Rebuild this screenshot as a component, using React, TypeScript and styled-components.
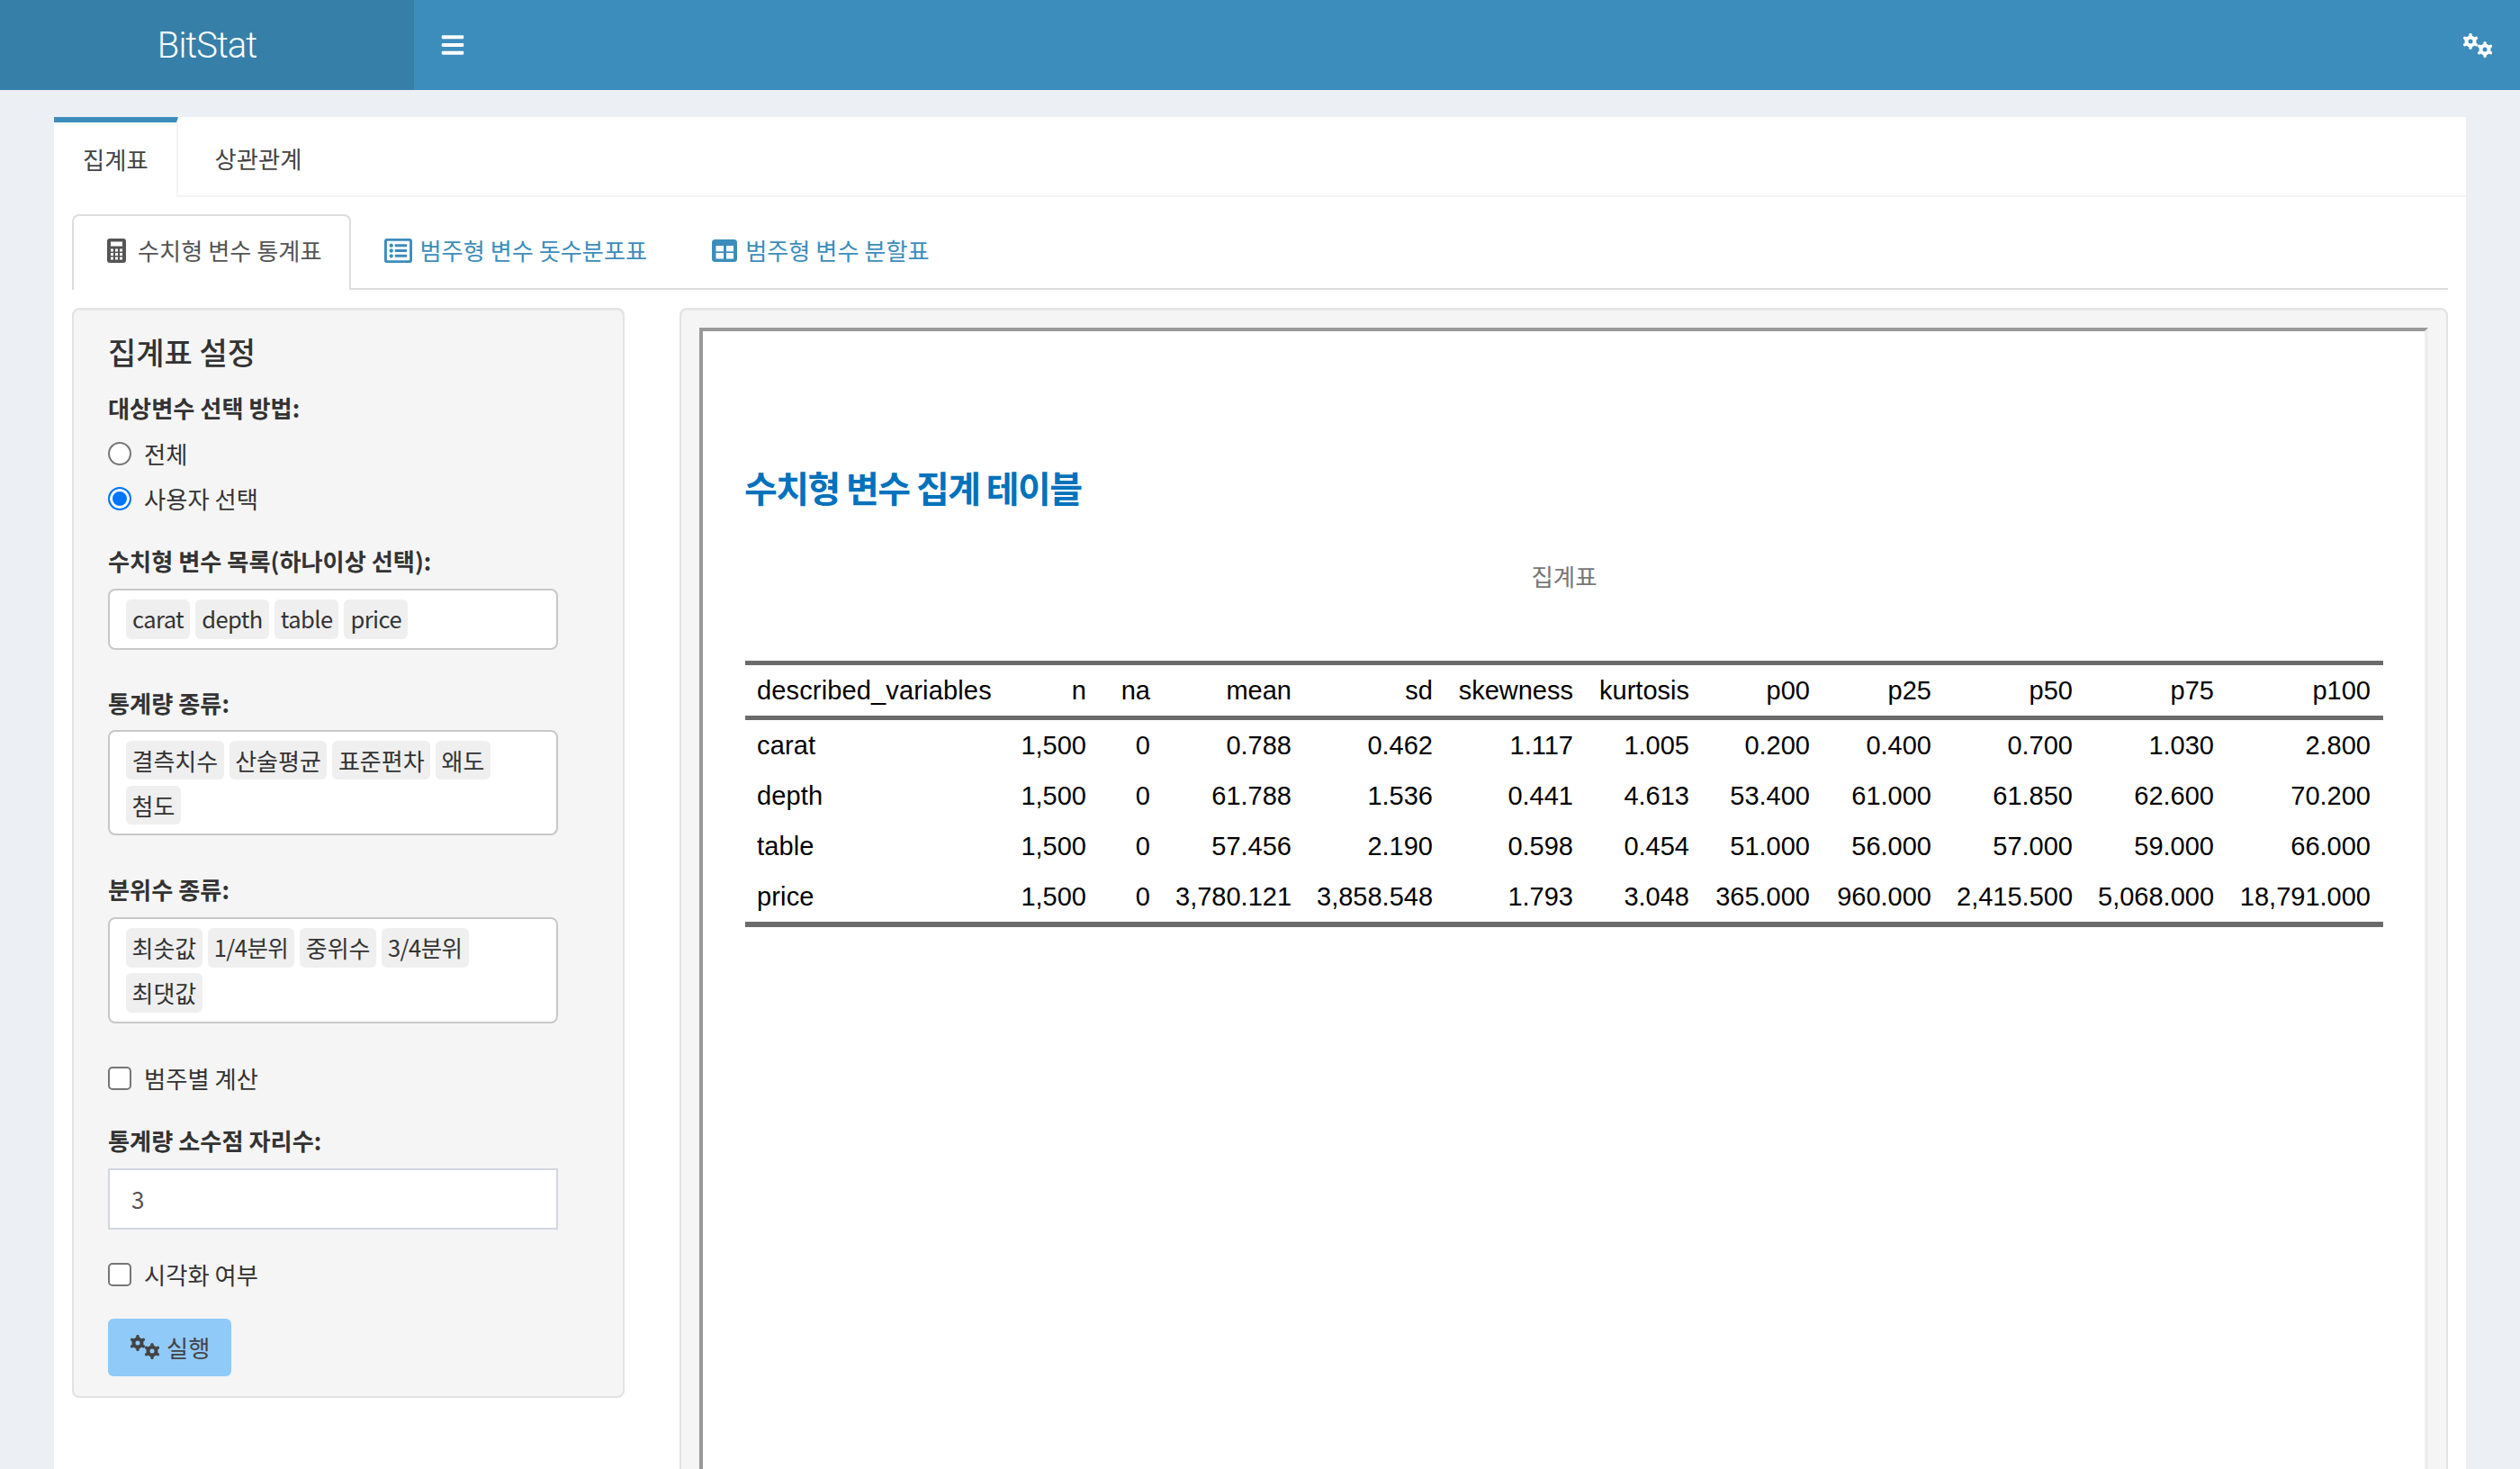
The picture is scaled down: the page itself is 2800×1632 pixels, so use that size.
import styled, { createGlobalStyle } from "styled-components";
import { FaBars, FaRegListAlt } from "react-icons/fa";

const KR = `"Noto Sans CJK KR", "Noto Sans", sans-serif`;

const GlobalStyle = createGlobalStyle`
  html, body {
    margin: 0;
    padding: 0;
    background: #ecf0f5;
  }
  * {
    box-sizing: border-box;
  }
`;

const Page = styled.div`
  height: 100vh;
  overflow: hidden;
  display: flex;
  flex-direction: column;
  font-family: ${KR};
  color: #333;
`;

const Navbar = styled.header`
  flex: none;
  height: 100px;
  display: flex;
  align-items: center;
  background: #3c8dbc;
  color: #fff;
`;

const Logo = styled.div`
  width: 460px;
  height: 100%;
  display: flex;
  align-items: center;
  justify-content: center;
  background: #367fa9;
  font-family: Roboto, "Liberation Sans", sans-serif;
  font-weight: 300;
  font-size: 40px;
  letter-spacing: -1px;
`;

const Toggle = styled.div`
  margin-left: 29px;
  display: flex;
  font-size: 28px;
`;

const NavRight = styled.div`
  margin-left: auto;
  margin-right: 30px;
  display: flex;
`;

const Main = styled.main`
  flex: 1;
  min-height: 0;
  padding: 30px 60px 0;
  display: flex;
`;

const Card = styled.section`
  flex: 1;
  min-width: 0;
  background: #fff;
  display: flex;
  flex-direction: column;
`;

const OuterTabs = styled.nav`
  flex: none;
  height: 89px;
  display: flex;
  border-bottom: 2px solid #f4f4f4;
`;

const OuterTab = styled.div<{ $active?: boolean }>`
  height: ${(p) => (p.$active ? "89px" : "87px")};
  display: flex;
  align-items: center;
  padding: 0 ${(p) => (p.$active ? "31px 2px 32px" : "40px 2px 41px")};
  font-size: 26.3px;
  color: #444;
  background: #fff;
  border-top: 6px solid ${(p) => (p.$active ? "#3c8dbc" : "transparent")};
  border-right: 2px solid ${(p) => (p.$active ? "#f4f4f4" : "transparent")};
`;

const CardBody = styled.div`
  flex: 1;
  min-height: 0;
  padding: 19px 20px 0;
  display: flex;
  flex-direction: column;
`;

const InnerTabs = styled.nav`
  flex: none;
  height: 84px;
  display: flex;
  border-bottom: 2px solid #ddd;
`;

const InnerTab = styled.div<{ $active?: boolean; $gap: number }>`
  height: 84px;
  display: flex;
  align-items: center;
  gap: ${(p) => p.$gap}px;
  padding: 0 ${(p) => (p.$active ? "31px 6px 37px" : "33px 6px 35px")};
  font-size: 26.2px;
  color: ${(p) => (p.$active ? "#555" : "#3c8dbc")};
  background: ${(p) => (p.$active ? "#fff" : "transparent")};
  border: 2px solid ${(p) => (p.$active ? "#ddd" : "transparent")};
  border-bottom: none;
  border-radius: 8px 8px 0 0;

  svg {
    flex: none;
  }
`;

const ListIcon = styled(FaRegListAlt)`
  font-size: 31px;
`;

const Columns = styled.div`
  flex: 1;
  min-height: 0;
  padding-top: 20px;
  display: flex;
  align-items: flex-start;
  gap: 61px;
`;

const Sidebar = styled.aside`
  flex: none;
  width: 614px;
  padding: 27px 38px 22px;
  background: #f5f5f5;
  border: 2px solid #e3e3e3;
  border-radius: 8px;
  box-shadow: inset 0 1px 1px rgba(0, 0, 0, 0.05);
`;

const SideTitle = styled.h4`
  margin: 0 0 22px;
  font-size: 34px;
  font-weight: 500;
  line-height: 40px;
  color: #333;
`;

const Field = styled.div<{ $mb?: number }>`
  margin-bottom: ${(p) => p.$mb ?? 40}px;
`;

const FieldLabel = styled.label<{ $mb?: number }>`
  display: block;
  margin-bottom: ${(p) => p.$mb ?? 11}px;
  font-size: 26.2px;
  font-weight: 700;
  line-height: 40px;
  color: #333;
`;

const OptionRow = styled.label<{ $h?: number }>`
  height: ${(p) => p.$h ?? 40}px;
  display: flex;
  align-items: center;
  gap: 14px;
  font-size: 26.3px;
  color: #333;
`;

const Radio = styled.span<{ $checked?: boolean }>`
  flex: none;
  width: 26px;
  height: 26px;
  margin-top: 2px;
  border-radius: 50%;
  background: ${(p) => (p.$checked ? "#0075ff" : "#fff")};
  border: 2px solid ${(p) => (p.$checked ? "#0075ff" : "#767676")};
  box-shadow: ${(p) => (p.$checked ? "inset 0 0 0 3px #fff" : "none")};
`;

const Checkbox = styled.span`
  flex: none;
  width: 26px;
  height: 26px;
  border-radius: 5px;
  background: #fff;
  border: 2px solid #767676;
`;

const ChipBox = styled.div`
  width: 500px;
  padding: 10px 18px;
  display: flex;
  flex-wrap: wrap;
  gap: 6.5px 6px;
  background: #fff;
  border: 2px solid #c8c8c8;
  border-radius: 8px;
`;

const Chip = styled.span<{ $latin?: boolean }>`
  height: 43.5px;
  padding: ${(p) => (p.$latin ? "0 7px 2px" : "0 6.5px")};
  display: flex;
  align-items: center;
  font-size: ${(p) => (p.$latin ? "25.5px" : "26px")};
  letter-spacing: ${(p) => (p.$latin ? "-0.55px" : "0")};
  color: #333;
  background: #efefef;
  border-radius: 6px;
`;

const NumberBox = styled.div`
  width: 500px;
  height: 68px;
  padding: 0 24px;
  display: flex;
  align-items: center;
  font-size: 26px;
  color: #555;
  background: #fff;
  border: 2px solid #d2d6de;
`;

const RunButton = styled.button`
  display: flex;
  align-items: center;
  gap: 7px;
  width: 137px;
  height: 64px;
  padding: 0 0 0 24px;
  font-family: inherit;
  font-size: 26.3px;
  color: #444;
  background: #90caf9;
  border: none;
  border-radius: 6px;
`;

const Well = styled.div`
  flex: 1;
  min-width: 0;
  height: 1400px;
  padding: 20px 20px 0;
  background: #f5f5f5;
  border: 2px solid #e3e3e3;
  border-radius: 8px;
  box-shadow: inset 0 1px 1px rgba(0, 0, 0, 0.05);
`;

const Frame = styled.div`
  height: 1400px;
  padding: 143px 0 0 47px;
  background: #fff;
  border-top: 4px solid #999;
  border-left: 4px solid #999;
  border-right: 4px solid #eee;
`;

const ReportTitle = styled.h3`
  margin: 0 0 49px -1px;
  font-size: 40px;
  line-height: 60px;
  font-weight: 700;
  letter-spacing: -1.6px;
  color: #0072bc;
`;

const TableCaption = styled.div`
  width: 1820px;
  margin-bottom: 74px;
  font-size: 26.5px;
  line-height: 40px;
  text-align: center;
  color: #777;
`;

const Table = styled.table`
  width: 1820px;
  table-layout: fixed;
  border-collapse: separate;
  border-spacing: 0;
  font-family: "Liberation Sans", Arial, sans-serif;
  font-size: 29px;
  color: #000;
  border-top: 5px solid #6b6b6b;
  border-bottom: 6px solid #6b6b6b;
`;

const Cell = styled.td<{ $left?: boolean }>`
  height: 56px;
  padding: 0 14px 0 ${(p) => (p.$left ? "13px" : "14px")};
  white-space: nowrap;
  font-weight: 400;
  text-align: ${(p) => (p.$left ? "left" : "right")};
  letter-spacing: ${(p) => (p.$left ? "0.15px" : "0")};
`;

const HeadCell = styled(Cell)`
  height: 61px;
  border-bottom: 5px solid #6b6b6b;
`;

const Col = styled.col<{ $w: number }>`
  width: ${(p) => p.$w}px;
`;

const GearSvg = styled.svg`
  flex: none;
  display: block;
`;

// two six-toothed gears, the package icons have a different tooth shape
function Gear({ cx, cy }: { cx: number; cy: number }) {
  const teeth = [90, 30, -30, -90, -150, 150].map((deg) => {
    const a = (deg * Math.PI) / 180;
    return [cx + Math.cos(a) * 5.5, cy - Math.sin(a) * 5.5, cx + Math.cos(a) * 7.4, cy - Math.sin(a) * 7.4];
  });
  return (
    <g stroke="currentColor" fill="none">
      <circle cx={cx} cy={cy} r={4.5} strokeWidth={4} />
      {teeth.map(([x1, y1, x2, y2], i) => (
        <line key={i} x1={x1} y1={y1} x2={x2} y2={y2} strokeWidth={3.4} strokeLinecap="round" />
      ))}
    </g>
  );
}

function Gears() {
  return (
    <GearSvg width={34} height={27} viewBox="0 0 34 27">
      <Gear cx={9} cy={9} />
      <Gear cx={25} cy={18} />
    </GearSvg>
  );
}

function CalculatorIcon() {
  const cells = [];
  for (const y of [11.5, 16, 20.5]) {
    for (const x of [4, 9, 14]) {
      cells.push(<rect key={`${x}-${y}`} x={x} y={y} width={3} height={3} fill="#fff" />);
    }
  }
  return (
    <svg width={21} height={27} viewBox="0 0 21 27">
      <rect width={21} height={27} rx={3} fill="currentColor" />
      <rect x={4} y={3.5} width={13} height={5} fill="#fff" />
      {cells}
    </svg>
  );
}

function TableIcon() {
  return (
    <svg width={28} height={25} viewBox="0 0 28 25">
      <rect width={28} height={25} rx={3.5} fill="currentColor" />
      <rect x={4.5} y={7} width={8.5} height={6.3} fill="#fff" />
      <rect x={16} y={7} width={8} height={6.3} fill="#fff" />
      <rect x={4.5} y={15} width={8.5} height={6.5} fill="#fff" />
      <rect x={16} y={15} width={8} height={6.5} fill="#fff" />
    </svg>
  );
}

const colWidths = [289, 104, 71, 157, 157, 156, 129, 134, 135, 157, 157, 174];
const headers = [
  "described_variables", "n", "na", "mean", "sd", "skewness", "kurtosis",
  "p00", "p25", "p50", "p75", "p100",
];
const rows = [
  ["carat", "1,500", "0", "0.788", "0.462", "1.117", "1.005", "0.200", "0.400", "0.700", "1.030", "2.800"],
  ["depth", "1,500", "0", "61.788", "1.536", "0.441", "4.613", "53.400", "61.000", "61.850", "62.600", "70.200"],
  ["table", "1,500", "0", "57.456", "2.190", "0.598", "0.454", "51.000", "56.000", "57.000", "59.000", "66.000"],
  ["price", "1,500", "0", "3,780.121", "3,858.548", "1.793", "3.048", "365.000", "960.000", "2,415.500", "5,068.000", "18,791.000"],
];

export default function App() {
  return (
    <Page>
      <GlobalStyle />
      <Navbar>
        <Logo>BitStat</Logo>
        <Toggle>
          <FaBars />
        </Toggle>
        <NavRight>
          <Gears />
        </NavRight>
      </Navbar>
      <Main>
        <Card>
          <OuterTabs>
            <OuterTab $active>집계표</OuterTab>
            <OuterTab>상관관계</OuterTab>
          </OuterTabs>
          <CardBody>
            <InnerTabs>
              <InnerTab $active $gap={13}>
                <CalculatorIcon />
                수치형 변수 통계표
              </InnerTab>
              <InnerTab $gap={8}>
                <ListIcon />
                범주형 변수 돗수분포표
              </InnerTab>
              <InnerTab $gap={9}>
                <TableIcon />
                범주형 변수 분할표
              </InnerTab>
            </InnerTabs>
            <Columns>
              <Sidebar>
                <SideTitle>집계표 설정</SideTitle>
                <Field $mb={25}>
                  <FieldLabel $mb={5}>대상변수 선택 방법:</FieldLabel>
                  <OptionRow $h={50}>
                    <Radio />
                    전체
                  </OptionRow>
                  <OptionRow $h={50}>
                    <Radio $checked />
                    사용자 선택
                  </OptionRow>
                </Field>
                <Field $mb={39}>
                  <FieldLabel>수치형 변수 목록(하나이상 선택):</FieldLabel>
                  <ChipBox>
                    {["carat", "depth", "table", "price"].map((c) => (
                      <Chip key={c} $latin>
                        {c}
                      </Chip>
                    ))}
                  </ChipBox>
                </Field>
                <Field>
                  <FieldLabel $mb={10}>통계량 종류:</FieldLabel>
                  <ChipBox>
                    {["결측치수", "산술평균", "표준편차", "왜도", "첨도"].map((c) => (
                      <Chip key={c}>{c}</Chip>
                    ))}
                  </ChipBox>
                </Field>
                <Field $mb={41}>
                  <FieldLabel>분위수 종류:</FieldLabel>
                  <ChipBox>
                    <Chip>최솟값</Chip>
                    <Chip $latin>1/4분위</Chip>
                    <Chip>중위수</Chip>
                    <Chip $latin>3/4분위</Chip>
                    <Chip>최댓값</Chip>
                  </ChipBox>
                </Field>
                <Field $mb={29}>
                  <OptionRow>
                    <Checkbox />
                    범주별 계산
                  </OptionRow>
                </Field>
                <Field $mb={30}>
                  <FieldLabel>통계량 소수점 자리수:</FieldLabel>
                  <NumberBox>3</NumberBox>
                </Field>
                <Field $mb={29}>
                  <OptionRow>
                    <Checkbox />
                    시각화 여부
                  </OptionRow>
                </Field>
                <RunButton>
                  <Gears />
                  실행
                </RunButton>
              </Sidebar>
              <Well>
                <Frame>
                  <ReportTitle>수치형 변수 집계 테이블</ReportTitle>
                  <TableCaption>집계표</TableCaption>
                  <Table>
                    <colgroup>
                      {colWidths.map((w, i) => (
                        <Col key={i} $w={w} />
                      ))}
                    </colgroup>
                    <thead>
                      <tr>
                        {headers.map((h, i) => (
                          <HeadCell as="th" key={h} $left={i === 0}>
                            {h}
                          </HeadCell>
                        ))}
                      </tr>
                    </thead>
                    <tbody>
                      {rows.map((r) => (
                        <tr key={r[0]}>
                          {r.map((v, i) => (
                            <Cell key={i} $left={i === 0}>
                              {v}
                            </Cell>
                          ))}
                        </tr>
                      ))}
                    </tbody>
                  </Table>
                </Frame>
              </Well>
            </Columns>
          </CardBody>
        </Card>
      </Main>
    </Page>
  );
}
